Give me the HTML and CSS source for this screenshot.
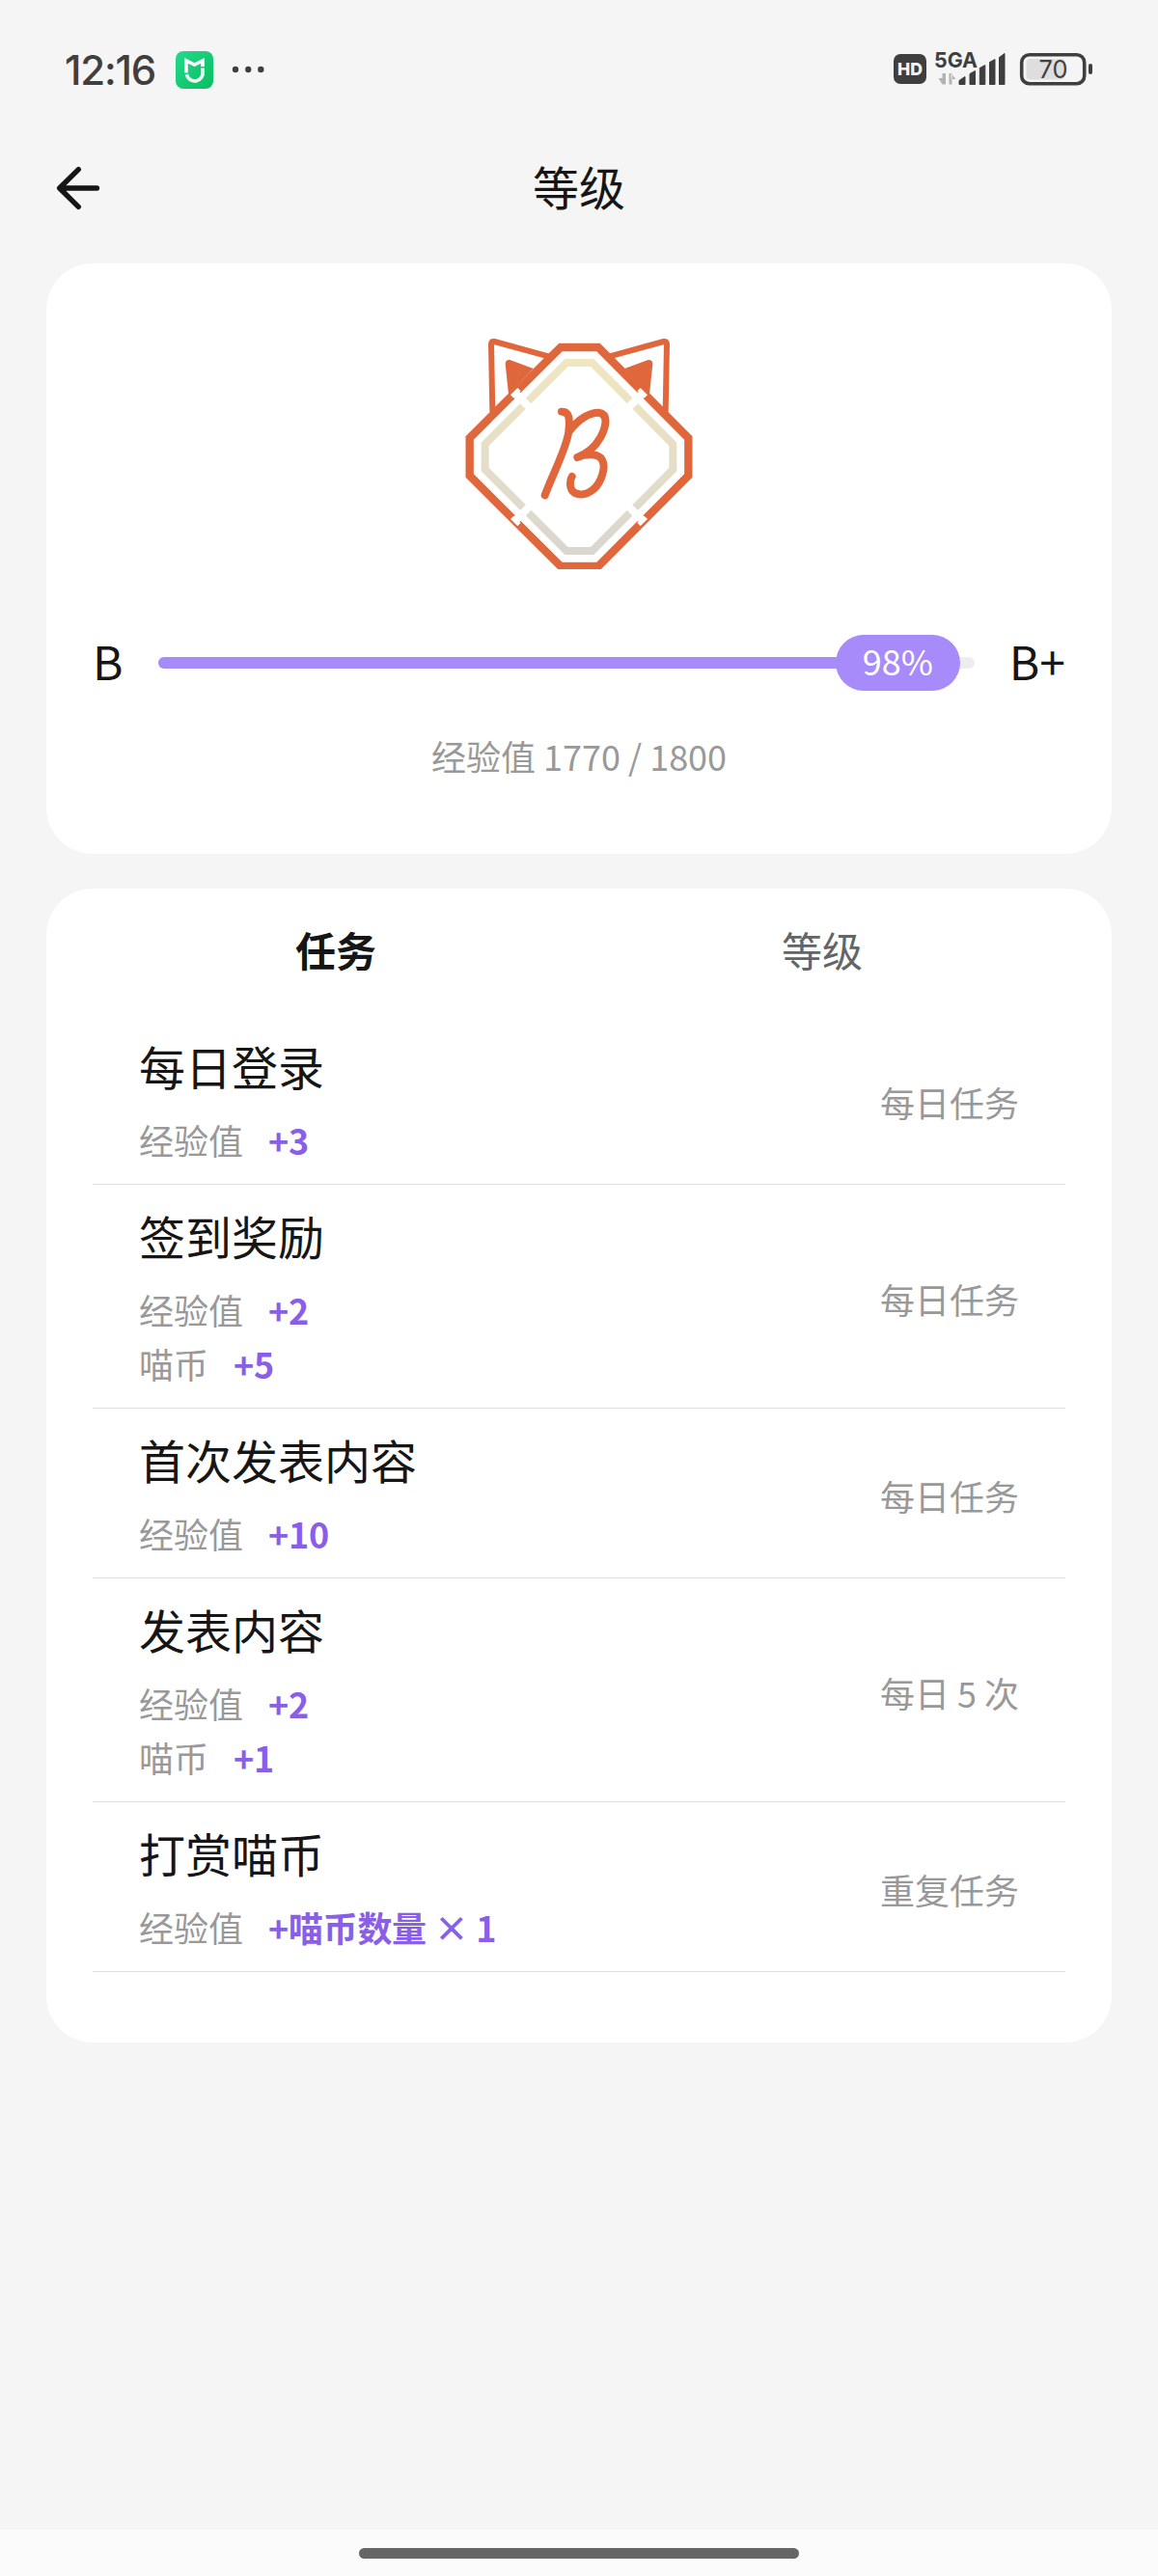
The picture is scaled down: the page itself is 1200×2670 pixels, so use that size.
FILE: index.html
```html
<!doctype html>
<html lang="zh-CN">
<head>
  <meta charset="utf-8">
  <title>等级</title>
  <link rel="stylesheet" href="styles.css">
</head>
<body>
  <div class="status-bar">
    <span class="clock">12:16</span>
    <svg class="app-icon" viewBox="0 0 39 39">
      <defs>
        <linearGradient id="appGreen" x1="0" y1="0" x2="1" y2="1">
          <stop offset="0" stop-color="#25d98c"/>
          <stop offset="1" stop-color="#09bd60"/>
        </linearGradient>
      </defs>
      <rect width="39" height="39" rx="8" fill="url(#appGreen)"/>
      <path d="M11 22.500V9.800l8.500 4.200L28 9.800v6.200" fill="none" stroke="#fff" stroke-width="3.6"/>
      <path d="M28 17.500v3.500a8.400 8.400 0 0 1-16.600 3.200" fill="none" stroke="#eafff4" stroke-width="3.6"/>
    </svg>
    <svg class="more-dots" viewBox="0 0 34 8" fill="#3f3f3f">
      <circle cx="4" cy="4" r="3.2"/>
      <circle cx="17.2" cy="4" r="3.2"/>
      <circle cx="30.3" cy="4" r="3.2"/>
    </svg>
    <svg class="status-icons" viewBox="0 0 208 40" fill="#3f3f3f">
      <rect x="0" y="6" width="34" height="31" rx="7"/>
      <text class="hd-text" x="4" y="28" textLength="26" lengthAdjust="spacingAndGlyphs">HD</text>
      <text class="net-text" x="42" y="20" textLength="45" lengthAdjust="spacingAndGlyphs">5GA</text>
      <path d="M50.500 26v11.500h3.500V26zM46.500 31l4 6.500h1V31zM57.500 26v11.500h3V26zM59.500 26l5 6h-5z" fill="#b3b3b3"/>
      <path d="M68 37.500v-4l6-4v8zM79 37.500V26.500l5.500-3v14zM89.300 37.500V20.500l5.500-3v20zM99.500 37.500V14.500l5.500-3v26zM109.500 37.500V9.500l5.500-4v32z" stroke="#3f3f3f" stroke-linejoin="round" stroke-width="1"/>
      <rect x="137.500" y="11" width="40" height="21.500" rx="4" fill="#dedede"/>
      <rect x="132.700" y="6.700" width="65" height="30" rx="8" fill="none" stroke="#3f3f3f" stroke-width="3.600"/>
      <rect x="202" y="16" width="4" height="11" rx="2"/>
      <text class="battery-text" x="150.500" y="31" textLength="30" lengthAdjust="spacingAndGlyphs">70</text>
    </svg>
  </div>

  <header class="nav-bar">
    <svg class="back-icon" viewBox="0 0 48 48" fill="none" stroke="#161616" stroke-width="5.4" stroke-linecap="round" stroke-linejoin="round">
      <path d="M24.300 4.700L4.700 24l19.600 19.300M5.500 24h38"/>
    </svg>
    <h1>等级</h1>
  </header>

  <main>
    <section class="card level-card">
      <svg class="emblem" viewBox="60 60 720 720" fill="none">
        <defs>
          <linearGradient id="ring" gradientUnits="userSpaceOnUse" x1="0" y1="130" x2="0" y2="735">
            <stop offset="0" stop-color="#f0e6c0"/>
            <stop offset="1" stop-color="#dad6d0"/>
          </linearGradient>
        </defs>
        <!-- ears -->
        <g>
          <path d="M151 290L147 80q0-10 10-8L325 118" stroke="#e0673c" stroke-width="18"/>
          <path d="M201 236L191 142q0-14 14-13L278 156z" fill="#e0673c"/>
        </g>
        <g transform="matrix(-1 0 0 1 840 0)">
          <path d="M151 290L147 80q0-10 10-8L325 118" stroke="#e0673c" stroke-width="18"/>
          <path d="M201 236L191 142q0-14 14-13L278 156z" fill="#e0673c"/>
        </g>
        <!-- face -->
        <path d="M363 90H480L760 372V489L480 771H363L80 489V372z" fill="#fff" stroke="#e0673c" stroke-width="25"/>
        <path d="M381 138H461L712 391V470L461 723H381L128 470V391z" stroke="url(#ring)" stroke-width="24"/>
        <!-- gaps at the four corners -->
        <g stroke="#fff">
          <path d="M222 233L278 289M618 233L562 289M222 629L278 573M618 629L562 573" stroke-width="24"/>
          <path d="M212 243L234 221M606 221L628 243M212 619L234 641M606 641L628 619" stroke-width="14"/>
        </g>
        <path d="M366 290C393 289 391 319 388 351C383 400 340 480 314 550M390 351C420 309 458 292 481 293C514 297 503 340 487 370C466 407 439 423 415 432C445 419 481 421 492 440C505 463 489 513 463 533C431 558 390 549 393 512Q393 500 398 492" stroke="#e0673c" stroke-width="24" stroke-linecap="round" stroke-linejoin="round"/>
      </svg>
      <div class="progress-row">
        <span class="level-name">B</span>
        <div class="track">
          <div class="fill" style="width: 98%">
            <span class="percent">98%</span>
          </div>
        </div>
        <span class="level-name">B+</span>
      </div>
      <p class="exp">经验值 1770 / 1800</p>
    </section>

    <section class="card">
      <div class="tabs">
        <div class="tab selected">任务</div>
        <div class="tab">等级</div>
      </div>
      <ul class="task-list">
        <li class="task">
          <div>
            <h2>每日登录</h2>
            <p class="reward">经验值 <b>+3</b></p>
          </div>
          <span class="frequency">每日任务</span>
        </li>
        <li class="task">
          <div>
            <h2>签到奖励</h2>
            <p class="reward">经验值 <b>+2</b></p>
            <p class="reward">喵币 <b>+5</b></p>
          </div>
          <span class="frequency">每日任务</span>
        </li>
        <li class="task">
          <div>
            <h2>首次发表内容</h2>
            <p class="reward">经验值 <b>+10</b></p>
          </div>
          <span class="frequency">每日任务</span>
        </li>
        <li class="task">
          <div>
            <h2>发表内容</h2>
            <p class="reward">经验值 <b>+2</b></p>
            <p class="reward">喵币 <b>+1</b></p>
          </div>
          <span class="frequency">每日 5 次</span>
        </li>
        <li class="task">
          <div>
            <h2>打赏喵币</h2>
            <p class="reward">经验值 <b>+喵币数量 × 1</b></p>
          </div>
          <span class="frequency">重复任务</span>
        </li>
      </ul>
    </section>
  </main>

  <footer class="gesture-bar">
    <div class="handle"></div>
  </footer>
</body>
</html>
```

FILE: styles.css
```css
* {
  box-sizing: border-box;
}
body {
  margin: 0;
  height: 2670px;
  display: flex;
  flex-direction: column;
  background-color: #f5f5f5;
  color: #161616;
  font-family: "Noto Sans CJK SC", sans-serif;
}
h1, h2, p, ul {
  margin: 0;
  padding: 0;
  font-weight: 400;
}

/* Status bar */
.status-bar {
  display: flex;
  align-items: center;
  height: 144px;
  padding: 0 66px 0 67px;
}
.clock {
  width: 115px;
  font-family: Inter, sans-serif;
  font-size: 42px;
  font-weight: 450;
  letter-spacing: -1.2px;
  color: #3f3f3f;
}
.app-icon {
  width: 39px;
  height: 39px;
}
.more-dots {
  width: 34px;
  height: 8px;
  margin-left: 19px;
}
.status-icons {
  width: 208px;
  height: 40px;
  margin-left: auto;
  margin-bottom: 4px;
}
.hd-text {
  font: 800 18px Inter, sans-serif;
  fill: #f5f5f5;
}
.net-text {
  font: 700 22px Inter, sans-serif;
}
.battery-text {
  font: 400 26px Inter, sans-serif;
}

/* Title bar */
.nav-bar {
  display: grid;
  grid-template-columns: 48px 1fr 48px;
  align-items: center;
  height: 102px;
  padding: 0 57px;
}
.back-icon {
  width: 48px;
  height: 48px;
}
.nav-bar h1 {
  padding-bottom: 6px;
  text-align: center;
  font-size: 48px;
  line-height: 72px;
}

main {
  flex: 1;
  display: flex;
  flex-direction: column;
  gap: 36px;
  padding: 27px 48px 0;
}
.card {
  background-color: #fff;
  border-radius: 48px;
  padding: 0 48px;
}

/* Level progress */
.level-card {
  display: flex;
  flex-direction: column;
  align-items: center;
  height: 612px;
  padding-top: 77px;
}
.emblem {
  width: 240px;
  height: 240px;
}
.progress-row {
  display: flex;
  align-items: center;
  gap: 36px;
  width: 100%;
  height: 72px;
  margin-top: 61px;
}
.level-name {
  padding-bottom: 6px;
  font-size: 48px;
  line-height: 66px;
}
.track {
  flex: 1;
  height: 12px;
  border-radius: 6px;
  background-color: #ebedf0;
}
.fill {
  display: flex;
  align-items: center;
  justify-content: flex-end;
  height: 100%;
  border-radius: 6px;
  background-color: #a78bfa;
}
.percent {
  flex: none;
  width: 129px;
  margin-right: -2px;
  padding-bottom: 6px;
  border-radius: 29px;
  background-color: #a78bfa;
  color: #fff;
  font-size: 36px;
  line-height: 52px;
  text-align: center;
}
.exp {
  margin-top: 33px;
  font-size: 36px;
  line-height: 54px;
  color: #999;
}

/* Tabs */
.tabs {
  display: flex;
  height: 131px;
}
.tab {
  flex: 1;
  text-align: center;
  font-size: 42px;
  line-height: 125px;
  color: #646566;
}
.tab.selected {
  color: #161616;
  font-weight: 700;
}

/* Task list */
.task-list {
  list-style: none;
  padding-bottom: 73px;
}
.task {
  display: flex;
  align-items: center;
  justify-content: space-between;
  padding: 16px 48px 18px;
  border-bottom: 1px solid #dedee0;
}
.task h2 {
  margin-bottom: 13px;
  font-size: 48px;
  line-height: 72px;
}
.reward {
  font-size: 36px;
  line-height: 56px;
  color: #999;
}
.reward b {
  margin-left: 18px;
  color: #895fe8;
  font-weight: 700;
  letter-spacing: -0.3px;
}
.frequency {
  padding-top: 6px;
  font-size: 36px;
  color: #999;
}

/* Gesture bar */
.gesture-bar {
  display: flex;
  justify-content: center;
  height: 48px;
  padding-top: 19px;
  background-color: #fbfbfb;
}
.handle {
  width: 456px;
  height: 11px;
  border-radius: 6px;
  background-color: #666;
}
```
